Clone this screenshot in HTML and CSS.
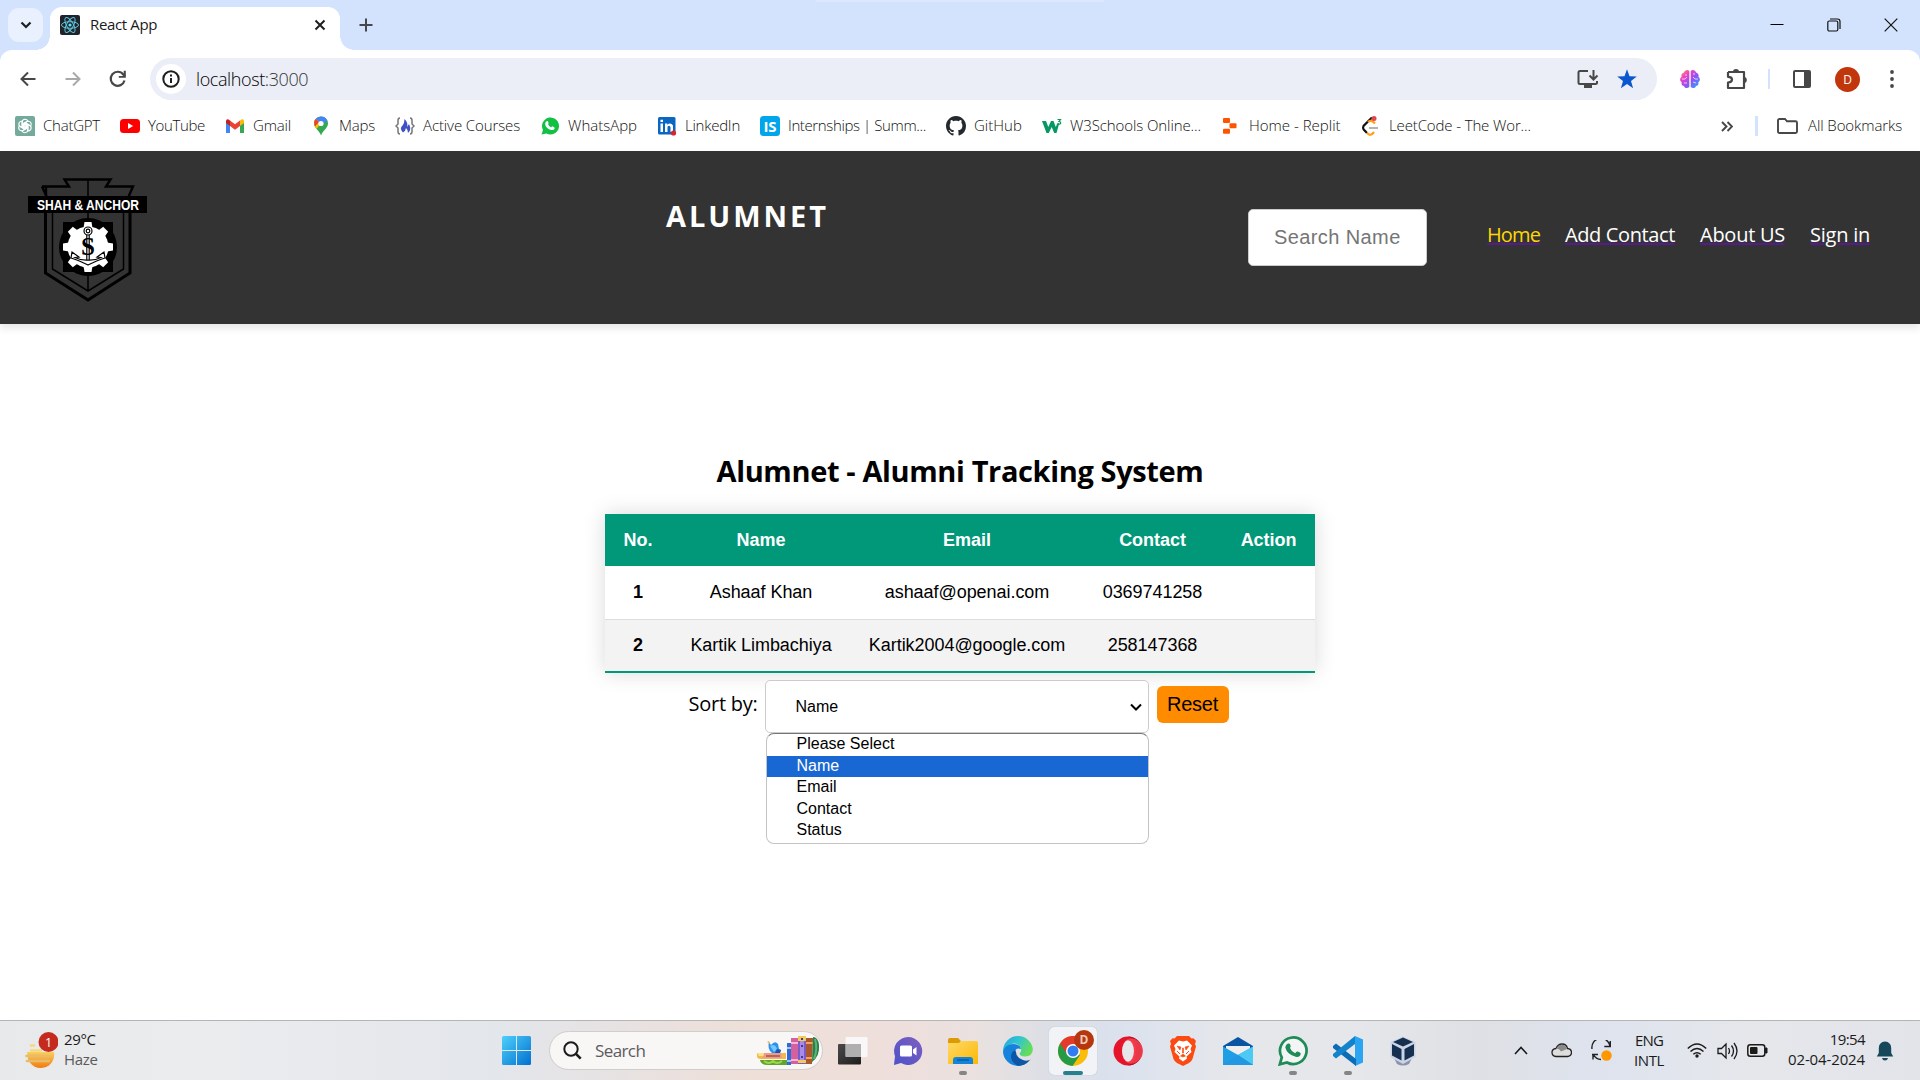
FILE: index.html
```html
<!DOCTYPE html>
<html lang="en">
<head>
<meta charset="utf-8">
<title>React App</title>
<link rel="stylesheet" href="styles.css">
</head>
<body>
<div class="screen">
  <div class="tabstrip">
    <div class="tab-search"><svg width="12" height="8" viewBox="0 0 12 8"><path d="M1.5 1.5 6 6l4.500-4.500" fill="none" stroke="#1f1f1f" stroke-width="2.200"/></svg></div>
    <div class="tab">
      <svg class="fav" width="20" height="20" viewBox="0 0 20 20"><rect width="20" height="20" rx="2" fill="#20232a"/><g fill="none" stroke="#5cc5dd" stroke-width="1"><ellipse cx="10" cy="10" rx="8.500" ry="3.300"/><ellipse cx="10" cy="10" rx="8.500" ry="3.300" transform="rotate(60 10 10)"/><ellipse cx="10" cy="10" rx="8.500" ry="3.300" transform="rotate(120 10 10)"/></g><circle cx="10" cy="10" r="1.600" fill="#61dafb"/></svg>
      <span class="tab-title">React App</span>
      <svg width="12" height="12" viewBox="0 0 12 12"><path d="M1.500 1.500l9 9M10.500 1.500l-9 9" stroke="#1f1f1f" stroke-width="2"/></svg>
    </div>
    <svg class="new-tab" width="14" height="14" viewBox="0 0 14 14"><path d="M7 .5v13M.5 7h13" stroke="#474747" stroke-width="2"/></svg>
    <div class="win-controls">
      <svg width="14" height="14" viewBox="0 0 14 14"><path d="M.5 6.500h13" stroke="#000" stroke-width="1"/></svg>
      <svg width="14" height="14" viewBox="0 0 14 14"><g fill="none" stroke="#111" stroke-width="1.200"><rect x=".8" y="3" width="10" height="10" rx="1.500"/><path d="M3 1h7.500q2.500 0 2.500 2.500V11"/></g></svg>
      <svg width="14" height="14" viewBox="0 0 14 14"><path d="M.7.7l12.600 12.600M13.300.7.7 13.300" stroke="#111" stroke-width="1.200"/></svg>
    </div>
  </div>
  <div class="chrome">
    <div class="toolbar">
      <svg class="t-back" width="16" height="16" viewBox="0 0 16 16"><path d="M15.500 8H2M8 1.500 1.500 8 8 14.500" fill="none" stroke="#474747" stroke-width="2"/></svg>
      <svg class="t-fwd" width="16" height="16" viewBox="0 0 16 16"><path d="M.5 8H14M8 1.500 14.500 8 8 14.500" fill="none" stroke="#a9a9a9" stroke-width="2"/></svg>
      <svg class="t-reload" width="18" height="18" viewBox="0 0 18 18"><path d="M15.500 10.500A7 7 0 1 1 14.300 4.500L16 6.500" fill="none" stroke="#474747" stroke-width="2.200"/><path d="M16.800.8v7h-7V6h4.900V.8z" fill="#474747"/></svg>
      <div class="omnibox">
        <div class="info"><svg width="18" height="18" viewBox="0 0 18 18"><circle cx="9" cy="9" r="7.700" fill="none" stroke="#1f1f1f" stroke-width="2"/><path d="M9 8v5M9 4.600v2" stroke="#1f1f1f" stroke-width="2"/></svg></div>
        <span class="url">localhost<i>:3000</i></span>
        <svg class="install" width="22" height="20" viewBox="0 0 22 20"><path d="M11 2H3Q1.500 2 1.500 3.500v10Q1.500 15 3 15h15.500Q20 15 20 13.500V12" fill="none" stroke="#474747" stroke-width="2"/><path d="M7 15h8v4H7z" fill="#474747"/><path d="M16.500 1v9M12.500 6.500l4 4 4-4" fill="none" stroke="#474747" stroke-width="2"/></svg>
        <svg width="20" height="20" viewBox="0 0 20 20"><path d="M10 .3l2.500 6.900 7.300.2-5.800 4.500 2.100 7.300L10 15l-6.100 4.200L6 11.900.2 7.400l7.300-.2z" fill="#0b57d0"/></svg>
      </div>
      <svg class="brain" width="20" height="20" viewBox="0 0 20 20"><defs><linearGradient id="br" x1="0" y1="0" x2="1" y2="1"><stop offset="0" stop-color="#ffb02e"/><stop offset=".3" stop-color="#ee3fc8"/><stop offset=".6" stop-color="#8b55f6"/><stop offset="1" stop-color="#25b0ff"/></linearGradient></defs><path d="M9.300 2v16c-2 2-5 1-5.300-1-2 0-3-2-2.200-3.500C-.5 12-.3 9 1.500 8 1 5.500 2 4 4 3.500 4.500.8 8 0 9.300 2zM10.700 2v16c2 2 5 1 5.300-1 2 0 3-2 2.200-3.500 2.300-1.500 2.100-4.500.3-5.500.5-2.500-.5-4-2.500-4.500C15.500.8 12 0 10.700 2z" fill="url(#br)"/><path d="M2 10h3l2-2M4 14h3M6 5v2M18 10h-3l-2-2M16 14l-3-1M14 4v2" fill="none" stroke="#fff" stroke-opacity=".7" stroke-width="1"/></svg>
      <svg class="puzzle" width="22" height="21" viewBox="0 0 22 21"><path d="M2 3h16v5.500M18 13v6H2v-5.500q4-.3 4-3T2 7.800V3M18 8v6" fill="none" stroke="#474747" stroke-width="2.200" stroke-linejoin="round"/><path d="M7 2.500a3 2.500 0 0 1 6 0zM18 8a2.800 3 0 0 1 0 6z" fill="#474747"/></svg>
      <div class="sep"></div>
      <svg class="panel" width="18" height="18" viewBox="0 0 18 18"><rect x="1" y="1" width="16" height="16" rx="1" fill="none" stroke="#474747" stroke-width="2"/><path d="M11 1h6v16h-6z" fill="#474747"/></svg>
      <div class="avatar">D</div>
      <svg class="kebab" width="4" height="18" viewBox="0 0 4 18"><g fill="#474747"><circle cx="2" cy="2" r="1.900"/><circle cx="2" cy="9" r="1.900"/><circle cx="2" cy="16" r="1.900"/></g></svg>
    </div>
    <div class="bookmarks">
      <div class="bm chatgpt"><svg viewBox="0 0 20 20"><path d="M2 0h16q2 0 2 2v18H2q-2 0-2-2V2q0-2 2-2z" fill="#74aa9c"/><g fill="none" stroke="#fff" stroke-width="1.100"><path id="petal" d="M10 7.500 13 9.200v4.300q-.3 3-3 3.200-2 0-3-1.800l4-2.200V8.500"/><use href="#petal" transform="rotate(60 10 10)"/><use href="#petal" transform="rotate(120 10 10)"/><use href="#petal" transform="rotate(180 10 10)"/><use href="#petal" transform="rotate(240 10 10)"/><use href="#petal" transform="rotate(300 10 10)"/></g></svg><span>ChatGPT</span></div>
      <div class="bm youtube"><svg viewBox="0 0 20 20"><rect y="3" width="20" height="14" rx="3.500" fill="#f00"/><path d="M8 7v6l5.200-3z" fill="#fff"/></svg><span>YouTube</span></div>
      <div class="bm gmail"><svg viewBox="0 0 20 20"><path d="M1 5v12h4V9z" fill="#4285f4"/><path d="M15 9v8h4V5z" fill="#34a853"/><path d="M15 4.500V10l4-3V5q-.5-3-4-.5z" fill="#fbbc04"/><path d="M5 4.500 10 8.300l5-3.800V10l-5 3.800L5 10z" fill="#ea4335"/><path d="M1 5v2l4 3V4.500Q1.500 2 1 5z" fill="#c5221f"/></svg><span>Gmail</span></div>
      <div class="bm maps"><svg viewBox="0 0 20 20"><path d="M10 .5A7 7 0 0 1 17 7.500C17 12 12 14 10 19.500 8 14 3 12 3 7.500A7 7 0 0 1 10 .5z" fill="#34a853"/><path d="M10 .5A7 7 0 0 1 16.400 4.800L10 9 4.600 3A7 7 0 0 1 10 .5z" fill="#4285f4"/><path d="M4.600 3 10 7.500 5.500 13Q3 10.500 3 7.500 3 5 4.600 3z" fill="#fbbc04"/><path d="M4.600 3 8 6 4 10.500Q2 6 4.600 3z" fill="#ea4335"/><circle cx="10" cy="7.500" r="2.600" fill="#fff"/></svg><span>Maps</span></div>
      <div class="bm courses"><svg viewBox="0 0 20 20"><path d="M5 2Q3 2 3 4.500V8L1 10l2 2v3.500Q3 18 5 18M15 2q2 0 2 2.500V8l2 2-2 2v3.500q0 2.500-2 2.500" fill="none" stroke="#777" stroke-width="1.500"/><path d="M9.500 3q4 4 2.500 8l2-3q3 6-1 9 .3-3-2-5-.5 3-3 4.500-4-4-.5-7 2-2 2-6.500z" fill="#3f51c5"/></svg><span>Active Courses</span></div>
      <div class="bm whatsapp"><svg viewBox="0 0 20 20"><path d="M1.500 18.500 3 14A8.500 8.500 0 1 1 6.500 17.500z" fill="#12c143"/><path d="M6.500 5.200q1.300-.5 1.800.8.6 1.500-.2 2.200.8 2 3 3.200 1-1.300 1.700-1 2.400.9 1.900 2-.7 2-3.500 1.600-5-1.200-6-5.500-.2-2.400 1.300-3.300z" fill="#fff"/></svg><span>WhatsApp</span></div>
      <div class="bm linkedin"><svg viewBox="0 0 20 20"><rect x="1" y="1" width="17.500" height="17.500" rx="1.500" fill="#0a66c2"/><path d="M3.500 7.500H6V16H3.500zM3.500 3.700H6V6H3.500zM8 7.500h2.300v1.200q3.500-2.800 5.700.8V16h-2.500v-5q-1.500-2.500-3-.2V16H8z" fill="#fff"/><circle cx="16.500" cy="17" r="2.600" fill="#e0202b"/></svg><span>LinkedIn</span></div>
      <div class="bm interns"><svg viewBox="0 0 20 20"><rect width="20" height="20" rx="3.500" fill="#00a5ec"/><text x="3.500" y="15.500" font-family="Open Sans" font-size="15" font-weight="700" fill="#fff" textLength="13">IS</text></svg><span>Internships | Summ...</span></div>
      <div class="bm github"><svg viewBox="0 0 16 16"><path fill="#24292f" d="M8 0C3.580 0 0 3.580 0 8c0 3.540 2.290 6.530 5.470 7.590.4.070.55-.17.55-.38 0-.19-.01-.82-.01-1.490-2.010.37-2.530-.49-2.690-.94-.09-.23-.48-.94-.82-1.130-.28-.15-.68-.52-.01-.53.63-.01 1.080.58 1.230.82.72 1.210 1.870.87 2.330.66.070-.52.280-.87.510-1.070-1.780-.2-3.640-.89-3.640-3.950 0-.87.310-1.590.820-2.150-.080-.2-.36-1.020.080-2.120 0 0 .67-.21 2.200.82.640-.18 1.320-.27 2-.27s1.360.09 2 .27c1.530-1.040 2.200-.82 2.200-.82.440 1.100.160 1.920.080 2.120.510.560.820 1.270.820 2.150 0 3.070-1.870 3.750-3.650 3.950.290.250.540.730.540 1.480 0 1.070-.01 1.930-.01 2.200 0 .21.150.46.550.38A8.010 8.010 0 0 0 16 8c0-4.420-3.580-8-8-8z"/></svg><span>GitHub</span></div>
      <div class="bm w3"><svg viewBox="0 0 20 20"><path d="M0 5h4l2.300 6L9 5h2.500l2.300 6 1.400-3.500h2L14.500 17h-2.300L9.700 11 6.800 17H4.500z" fill="#059862"/><path d="M15.500 3.500h3L17 5.500q2 .2 1.600 1.800-1 1.500-3 .2" fill="none" stroke="#059862" stroke-width="1.200"/></svg><span>W3Schools Online...</span></div>
      <div class="bm replit"><svg viewBox="0 0 20 20"><g fill="#fd5402"><rect x="2" y="2" width="7" height="5" rx="1"/><rect x="8.500" y="7.300" width="7" height="5" rx="1"/><rect x="2" y="12.700" width="7" height="5" rx="1"/></g></svg><span>Home - Replit</span></div>
      <div class="bm leet"><svg viewBox="0 0 20 20"><path d="M11 1.500 2.500 10q-1 2 .2 3.500L6 17" fill="none" stroke="#111" stroke-width="2.200"/><path d="M6 17q3.500 4 7-1M7 6q3-3 7 1.500" fill="none" stroke="#ffa116" stroke-width="2.200"/><path d="M8 12h9" stroke="#b3b3b3" stroke-width="2"/><circle cx="13" cy="2.500" r="2.500" fill="#e0464f"/></svg><span>LeetCode - The Wor...</span></div>
      <svg class="more" width="12" height="11" viewBox="0 0 12 11"><path d="M1 1l4.500 4.500L1 10M6.500 1 11 5.500 6.500 10" fill="none" stroke="#474747" stroke-width="1.900"/></svg>
      <div class="sep2"></div>
      <svg class="folder" width="21" height="16" viewBox="0 0 21 16"><path d="M1 13.500v-11Q1 1 2.500 1H8l2 2.300h8.500Q20 3.300 20 4.800v8.700q0 1.500-1.500 1.500h-16Q1 15 1 13.500z" fill="none" stroke="#474747" stroke-width="1.900"/></svg>
      <span class="all">All Bookmarks</span>
    </div>
  </div>

  <div class="page">
    <header class="site-head">
      <svg class="logo" width="120" height="126" viewBox="0 0 120 126">
        <g fill="none" stroke="#000"><path d="M18 20V8.500h23L36.500 1.500h46L78 8.500h27L100 20M14 8.500h25M14 8.500l5 11" stroke-width="2.400"/><path d="M17.500 35v60L60 122l42-27V35" stroke-width="3"/><path d="M24.500 35v56L60 113l35.500-22V35M60 2v111" stroke-width="1.500"/></g>
        <path d="M0 18h119v17H0z"/>
        <text x="9" y="31.500" font-family="Liberation Sans" font-size="14" font-weight="700" fill="#fff" textLength="102" lengthAdjust="spacingAndGlyphs">SHAH &amp; ANCHOR</text>
        <path d="M35 44h50v50H35z"/><circle cx="60" cy="69" r="29"/>
        <circle cx="60" cy="69" r="20.500" fill="#fff"/>
        <g fill="#fff"><path id="tooth" d="M55.500 50l1-6h7l1 6z"/><use href="#tooth" transform="rotate(45 60 69)"/><use href="#tooth" transform="rotate(90 60 69)"/><use href="#tooth" transform="rotate(135 60 69)"/><use href="#tooth" transform="rotate(180 60 69)"/><use href="#tooth" transform="rotate(225 60 69)"/><use href="#tooth" transform="rotate(270 60 69)"/><use href="#tooth" transform="rotate(315 60 69)"/></g>
        <g fill="none" stroke="#000" stroke-width="1.200"><circle cx="60" cy="53" r="4"/><circle cx="60" cy="53" r="1.800"/><path d="M58.800 57v25M61.200 57v25M44 74l-1 6q7 2 17 7 10-5 17-7l-1-6-7 5 4 .5q-6 3-13 2.500-7 .5-13-2.500l4-.5z"/></g>
        <text x="60" y="77" text-anchor="middle" font-family="Liberation Serif" font-size="25" font-weight="700">S</text>
      </svg>
      <h1 class="brand">ALUMNET</h1>
      <input class="search" placeholder="Search Name">
      <nav class="nav"><a class="home"><span>Home</span></a><a class="add"><span>Add Contact</span></a><a class="about"><span>About US</span></a><a class="signin"><span>Sign in</span></a></nav>
    </header>
    <main class="content">
      <h2>Alumnet - Alumni Tracking System</h2>
      <table>
        <colgroup><col class="c1"><col class="c2"><col class="c3"><col class="c4"><col class="c5"></colgroup>
        <thead><tr><th>No.</th><th>Name</th><th>Email</th><th>Contact</th><th>Action</th></tr></thead>
        <tbody>
          <tr><th>1</th><td>Ashaaf Khan</td><td>ashaaf@openai.com</td><td>0369741258</td><td></td></tr>
          <tr><th>2</th><td>Kartik Limbachiya</td><td>Kartik2004@google.com</td><td>258147368</td><td></td></tr>
        </tbody>
      </table>
      <div class="sort">
        <label>Sort by:</label>
        <div class="select">
          <span>Name</span>
          <svg width="12" height="8" viewBox="0 0 12 8"><path d="M1 1.500l5 5 5-5" fill="none" stroke="#000" stroke-width="2"/></svg>
          <ul class="options"><li>Please Select</li><li class="sel">Name</li><li>Email</li><li>Contact</li><li>Status</li></ul>
        </div>
        <button>Reset</button>
      </div>
    </main>
  </div>

  <footer class="taskbar">
    <div class="weather">
      <svg width="38" height="38" viewBox="0 0 38 38"><defs><linearGradient id="sun" x1="0" y1="0" x2="0" y2="1"><stop offset="0" stop-color="#fbd05c"/><stop offset="1" stop-color="#f27a10"/></linearGradient></defs><path d="M7 20h27a13.500 13.500 0 0 1-26 7z" fill="url(#sun)"/><g stroke-linecap="round" stroke-width="2.600"><path d="M11 13.500h3M11 18.500h10" stroke="#f9d778"/><path d="M6.500 24h17M7 29h22M23 24h6" stroke="#e6bd6c"/></g><circle cx="28.500" cy="10" r="10" fill="#c42b1c"/><text x="28.500" y="14.500" text-anchor="middle" font-family="Open Sans" font-size="12.500" fill="#fff">1</text></svg>
      <div class="wt"><span>29°C</span><span class="dim">Haze</span></div>
    </div>
    <svg class="start" width="29" height="29" viewBox="0 0 29 29"><defs><linearGradient id="wn" x1="0" y1="0" x2="1" y2="1"><stop offset="0" stop-color="#4fd0fb"/><stop offset="1" stop-color="#0070cf"/></linearGradient></defs><path d="M1.500 0H14v14H0V1.500Q0 0 1.500 0zM15 0h12.500Q29 0 29 1.500V14H15zM0 15h14v14H1.500Q0 29 0 27.500zM15 15h14v12.500q0 1.500-1.500 1.500H15z" fill="url(#wn)"/></svg>
    <div class="tsearch">
      <svg width="19" height="19" viewBox="0 0 19 19"><circle cx="8" cy="8" r="6.700" fill="none" stroke="#1b1b1b" stroke-width="2"/><path d="M12.700 12.700l5 5" stroke="#1b1b1b" stroke-width="2.600"/></svg>
      <span>Search</span>
      <svg class="art" width="64" height="30" viewBox="0 0 64 30"><path d="M4 24h27v5H12q-7 0-8-5z" fill="#5da52c"/><path d="M8 25q5 4 9 0 4 4 9 0" fill="none" stroke="#9fd44c" stroke-width="2"/><path d="M1 17h29v6H5q-4 0-4-3z" fill="#f0b94a"/><path d="M1 17h10v3H3z" fill="#ffe18a"/><path d="M8 17h17l1 5H7z" fill="#ee9a86"/><path d="M10 19h14v2H10z" fill="#b5655a"/><path d="M13 6l2 3q4-5 7-1l1 5 2 1-1 3h-8q-5-4-3-11z" fill="#2a93ec"/><path d="M14 10q5-3 7 3l-3 3z" fill="#76c5ff"/><path d="M21 13l4 1-1 3h-5z" fill="#1559b5"/><path d="M11 6l2-1 1 3z" fill="#f7b030"/><path d="M31 7h4v22h-4z" fill="#2f6bd3"/><path d="M31 11h4v2h-4zM31 24h4v2h-4z" fill="#9ec4ff"/><path d="M35 2h7v26h-7z" fill="#d2619d"/><path d="M35 6h7v2h-7zM35 23h7v2h-7z" fill="#f7b6d4"/><path d="M42 0h8v28h-8z" fill="#7c5cc9"/><path d="M42 0h8v5h-8zM42 24h8v3h-8z" fill="#f2cb5d"/><path d="M44 5h4v19h-4z" fill="#a78be6"/><path d="M45 2h2v2h-2zM45 9h2v2h-2zM45 20h2v2h-2z" fill="#4d3590"/><path d="M50 2h7l-1 26h-6z" fill="#a9592b"/><path d="M50 6h7v2h-7zM50 21h6v2h-6z" fill="#f3a264"/><path d="M57 1q5 0 6 8 1 11-7 17z" fill="#2b8049"/><path d="M59 3q3 10-1 20" fill="none" stroke="#5bb476" stroke-width="2"/></svg>
    </div>
    <div class="apps">
      <div class="app"><svg width="30" height="30" viewBox="0 0 30 30"><defs><linearGradient id="tv" x1="0" y1="0" x2="1" y2="1"><stop offset="0" stop-color="#4a4a4a"/><stop offset="1" stop-color="#1d1d1d"/></linearGradient></defs><rect y="8" width="23" height="20.500" rx="1" fill="url(#tv)"/><rect x="7.500" y="1" width="22" height="20" rx="1" fill="#fafafa" fill-opacity=".87"/><path d="M7.500 8H23v13H7.500z" fill="#9a9a9a" fill-opacity=".7"/></svg></div>
      <div class="app"><svg width="30" height="30" viewBox="0 0 30 30"><defs><linearGradient id="ch" x1="1" y1="0" x2="0" y2="1"><stop offset="0" stop-color="#7f5fc0"/><stop offset="1" stop-color="#4b52c9"/></linearGradient></defs><path d="M15 1a14 14 0 1 1-7 26L1 29l1-9A14 14 0 0 1 15 1z" fill="url(#ch)"/><rect x="7" y="9.500" width="12" height="11" rx="1.500" fill="#fff"/><path d="M20 13.500 23.500 11v8.500L20 17z" fill="#fff"/></svg></div>
      <div class="app run"><svg width="30" height="30" viewBox="0 0 30 30"><defs><linearGradient id="fo" x1="0" y1="0" x2="1" y2="1"><stop offset="0" stop-color="#ffd966"/><stop offset="1" stop-color="#fbb806"/></linearGradient></defs><path d="M0 4q0-2 2-2h8l3 3-2 3H0z" fill="#dc9a08"/><path d="M0 7h11l2-2h15q2 0 2 2v21H0z" fill="url(#fo)"/><path d="M5 28v-4q0-3 3-3h14q3 0 3 3v4z" fill="#1384d7"/><path d="M9 24h12" stroke="#0a5ca4" stroke-width="1.500"/></svg></div>
      <div class="app"><svg width="30" height="30" viewBox="0 0 30 30"><defs><linearGradient id="e1" x1="0" y1="0" x2="1" y2=".5"><stop offset="0" stop-color="#269fe5"/><stop offset=".5" stop-color="#31c6cf"/><stop offset="1" stop-color="#66dd58"/></linearGradient><clipPath id="ec"><circle cx="15" cy="15" r="15"/></clipPath></defs><g clip-path="url(#ec)"><path d="M0 0h30v13q-.5 7.500-8 7.500-5 0-5.500-3 3.500-4 0-7.500-7-7-16.500 5z" fill="url(#e1)"/><path d="M0 15Q3 8 10 8q7 0 8 5-5-2-6 3-1 5 3 9 4 4 9 3L20 30H0z" fill="#1583dc"/><path d="M12 14q-4 2-4 7 1 7 8 9h6q6-2 8-8-5 4-10 2-7-3-7-8z" fill="#0d56a5"/></g></svg></div>
      <div class="app active"><svg width="30" height="30" viewBox="0 0 30 30"><circle cx="15" cy="15" r="15" fill="#fbbc0a"/><path d="M15 15 2 7.500A15 15 0 0 0 14.500 30L22 19z" fill="#269b45"/><path d="M15 8h13.300A15 15 0 0 0 2 7.500L9 18z" fill="#e23b2e"/><circle cx="15" cy="15" r="7" fill="#fff"/><circle cx="15" cy="15" r="5.500" fill="#2f7df0"/></svg><b class="pbadge">D</b></div>
      <div class="app"><svg width="30" height="30" viewBox="0 0 30 30"><ellipse cx="15" cy="15" rx="14.500" ry="14.500" fill="#e5142a"/><path d="M15 .5q5 0 9.500 3.500a15 15 0 0 1 0 22Q20 29.500 15 29.500q8-3 8-14.500T15 .5z" fill="#b60f22"/><path d="M12 5q4-4 10-2 8 4 8 12t-8 12q-6 2-10-2 9 1 9-10T12 5z" fill="#ff4c58" fill-opacity=".7"/><ellipse cx="15" cy="15" rx="6" ry="10.700" fill="#e5e7eb"/></svg></div>
      <div class="app"><svg width="30" height="30" viewBox="0 0 30 30"><path d="M9 0h12l2.500 2.500 2-.3L28 5l-1 3 1 2.500L24.500 23q-1 2.500-3.500 4l-6 3-6-3q-2.500-1.500-3.500-4L2 10.500 3 8 2 5l2.500-2.800 2 .3z" fill="#fb4b12"/><path d="M15 5.500l4-1 5 5-1.500 3.500 1 3-5 4.500.5 2-4 3-4-3 .5-2-5-4.500 1-3L6 9.500l5-5z" fill="#fff"/><path d="M9 10l4 1-1 3zM21 10l-4 1 1 3zM12.500 20l2.500-2 2.500 2-2.500 1zM14.500 12h1v5h-1z" fill="#fb4b12" stroke="#fb4b12" stroke-width=".6"/><path d="M9 15l3 3M21 15l-3 3" stroke="#fb4b12"/></svg></div>
      <div class="app"><svg width="30" height="30" viewBox="0 0 30 30"><path d="M0 10 15 1l15 9v4H0z" fill="#0a55a3"/><path d="M3 10h24v8H3z" fill="#eee"/><path d="M0 10.500 15 19l15-8.500V29H0z" fill="#1e9fe4"/><path d="M30 10.500V29L15 19z" fill="#4cc9f5"/><path d="M0 29l15-10 15 10z" fill="#2497e3"/></svg></div>
      <div class="app run"><svg width="30" height="30" viewBox="0 0 30 30"><path d="M1.800 28.300 3.800 21.500A13.300 13.300 0 1 1 9 26.500z" fill="#f3f5f5" stroke="#1e8b58" stroke-width="2.700"/><path d="M10 7.500q1.700-.5 2.300 1.300.9 2-.3 3.200 1.200 3.500 5.200 5.200 1.300-2 2.300-1.700 3.500 1.200 3.200 2.500-.7 3.500-5 2.800Q9 18.500 7.300 11.500 7.500 8.500 10 7.500z" fill="#1e8b58"/></svg></div>
      <div class="app run"><svg width="30" height="30" viewBox="0 0 30 30"><path d="M22 0l8 3.500v23L22 30z" fill="#2ba4f2"/><path d="M0 10l3-2.500L23 23v7L0 12z" fill="#0a6db5"/><path d="M0 20l3 2.500L22 8V0L0 18z" fill="#1383cc"/></svg></div>
      <div class="app vb"><svg width="28" height="30" viewBox="0 0 28 30"><path d="M5 22l9 4 9-4-3 6q-6 3-12 0z" fill="#8c93a8"/><path d="M14 .5 26.500 6v15L14 28 1.500 21V6z" fill="#cbd3e6"/><path d="M14 1.500 24 6l-10 4.500L4 6zM3 8l9.500 5v11.500L3 19.500zM25 8l-9.500 5v11.500l9.500-5z" fill="#16304f"/></svg></div>
    </div>
    <div class="tray">
      <svg class="y1" width="14" height="9" viewBox="0 0 14 9"><path d="M1 8l6-6.500L13 8" fill="none" stroke="#1b1b1b" stroke-width="1.600"/></svg>
      <svg class="y2" width="21" height="15" viewBox="0 0 21 15"><path d="M5 13.500q-4-.5-4-4t4-4q2-4.500 6-4.500 4.500 0 5.500 4.500 4 .5 4 4t-4 4z" fill="#dedede" stroke="#222" stroke-width="1.300"/><path d="M5 6q2-4.500 6-4.300 4 0 5 4.300l-6 2.500Q8 5 5 6z" fill="#8a8a8a"/></svg>
      <svg class="y3" width="21" height="21" viewBox="0 0 21 21"><path d="M1 9A9 9 0 0 1 19 6M19.300 1v5.500h-6M2 14v5.500M1 14.500h6M2 14q3 5.500 8 5.500" fill="none" stroke="#222" stroke-width="1.400"/><circle cx="15.500" cy="15.500" r="5.200" fill="#ff9800"/></svg>
      <div class="lang"><span>ENG</span><span class="intl">INTL</span></div>
      <svg class="y4" width="20" height="15" viewBox="0 0 20 15"><g fill="none" stroke="#1b1b1b" stroke-width="1.500"><path d="M.8 5.500Q10-3.500 19.200 5.500M3.500 8.500q6.500-6 13 0M6.300 11.300q3.700-3.200 7.400 0"/></g><circle cx="10" cy="13" r="1.700" fill="#1b1b1b"/></svg>
      <svg class="y5" width="21" height="18" viewBox="0 0 21 18"><g fill="none" stroke="#1b1b1b" stroke-width="1.300"><path d="M1 6.500h3.500L9 2v14l-4.500-4.500H1zM11.500 6q2 3 0 6M14.500 3.500q4 5.500 0 11M17 1q6 8 0 16"/></g></svg>
      <svg class="y6" width="21" height="13" viewBox="0 0 21 13"><rect x=".8" y=".8" width="17" height="11.400" rx="2.500" fill="none" stroke="#1b1b1b" stroke-width="1.500"/><rect x="3" y="3" width="7.500" height="7" rx="1" fill="#1b1b1b"/><path d="M18.500 4h1.500v5h-1.500z" fill="#1b1b1b" stroke="#1b1b1b"/></svg>
      <div class="clock"><span class="time">19:54</span><span class="date">02-04-2024</span></div>
      <svg class="bell" width="18" height="20" viewBox="0 0 18 20"><path d="M9 .5q6 .5 6.200 6.500v5l2 3.500H.8l2-3.500V7Q3 1 9 .5zM6 17h6q-.5 2.500-3 2.500T6 17z" fill="#17485a"/></svg>
    </div>
  </footer>
</div>
</body>
</html>
```
FILE: styles.css
```css
* { box-sizing: border-box; }
body { margin: 0; font-family: "Open Sans", "Noto Sans", sans-serif; background: #fff; }
svg { display: block; flex: none; }
.screen { width: 1920px; height: 1080px; display: flex; flex-direction: column; overflow: hidden; }

/* Browser tab strip */
.tabstrip { height: 50px; background: linear-gradient(90deg, transparent 815px, #dce8fd 816px, #dce8fd 1104px, transparent 1105px) 0 0 / 100% 2px no-repeat #d3e2fd; display: flex; align-items: center; flex: none; padding-left: 8px; }
.tab-search { width: 35px; height: 34px; border-radius: 11px; background: #e9f0fe; display: flex; align-items: center; justify-content: center; margin-right: 7px; }
.tab { position: relative; width: 290px; height: 43px; align-self: flex-end; background: #fff; border-radius: 12px 12px 0 0; display: flex; align-items: center; padding: 0 14px 7px 10px; }
.tab::before, .tab::after { content: ""; position: absolute; bottom: 0; width: 14px; height: 14px; }
.tab::before { left: -14px; background: radial-gradient(circle at 0 0, transparent 13.500px, #fff 14px); }
.tab::after { right: -14px; background: radial-gradient(circle at 100% 0, transparent 13.500px, #fff 14px); }
.tab svg { margin-top: 0; }
.tab-title { font-size: 15px; color: #1a1a1a; margin: -2px auto 0 10px; white-space: nowrap; letter-spacing: -.35px; }
.new-tab { margin-left: 19px; }
.win-controls { margin-left: auto; display: flex; gap: 43px; padding-right: 22px; }

/* Toolbar */
.chrome { background: linear-gradient(#d3e2fd 20px, #fff 20px); height: 101px; flex: none; }
.toolbar { height: 58px; background: #fff; border-radius: 12px 12px 0 0; display: flex; align-items: center; padding-left: 20px; }
.t-fwd { margin-left: 29px; }
.t-reload { margin-left: 28px; }
.omnibox { width: 1507px; height: 42px; border-radius: 21px; background: #ebeef7; display: flex; align-items: center; margin-left: 23px; padding: 0 20px 0 6px; }
.info { width: 30px; height: 30px; border-radius: 50%; background: #fff; display: flex; align-items: center; justify-content: center; }
.url { font-size: 18px; color: #000; margin: 0 auto 0 10px; white-space: nowrap; font-weight: 300; letter-spacing: -.4px; }
.url i { font-style: normal; color: #333; }
.install { margin-right: 18px; }
.brain { margin-left: 23px; }
.puzzle { margin-left: 26px; }
.sep { width: 2px; height: 20px; background: #d3e2fd; margin-left: 20px; }
.panel { margin-left: 23px; }
.avatar { width: 25px; height: 25px; border-radius: 50%; background: #c2360c; color: #fff; font-size: 12px; line-height: 25px; text-align: center; margin-left: 24px; }
.kebab { margin-left: 30px; }

/* Bookmarks bar */
.bookmarks { display: flex; height: 36px; align-items: center; padding-left: 15px; white-space: nowrap; font-size: 15px; font-weight: 300; color: #111; }
.bm { display: flex; align-items: center; gap: 8px; margin-right: 20px; }
.bm svg { width: 20px; height: 20px; }
.bm span, .all { position: relative; top: -1px; }
.bm span { flex: none; }
.chatgpt span { width: 57px; letter-spacing: -.23px; }
.youtube span { width: 57px; letter-spacing: -.35px; }
.gmail span { width: 38px; letter-spacing: -.17px; }
.maps span { width: 36px; letter-spacing: -.2px; }
.courses span { width: 97px; letter-spacing: -.11px; }
.whatsapp span { width: 69px; }
.linkedin span { width: 55px; letter-spacing: -.25px; }
.interns span { width: 138px; letter-spacing: -.38px; }
.github span { width: 48px; }
.w3 span { width: 131px; letter-spacing: -.1px; }
.replit span { width: 92px; }
.leet span { width: 142px; letter-spacing: -.13px; }
.more { margin-left: auto; }
.sep2 { width: 3px; height: 20px; background: #d3e2fd; margin: 0 19px 0 22px; }
.folder { margin-right: 10px; }
.all { width: 94px; letter-spacing: -.09px; margin-right: 18px; }

/* Site header */
.page { flex: 1; background: #fff; }
.site-head { height: 173px; background: #333; display: flex; align-items: flex-start; padding-left: 28px; box-shadow: 0 4px 8px rgba(0,0,0,.1); }
.logo { margin-top: 27px; }
.brand { margin: 45px 0 0 518px; font-size: 29px; line-height: 40px; color: #fff; width: 582px; letter-spacing: 2.950px; }
.search { width: 179px; height: 57px; margin: 58px 0 0; border: 1px solid #ccc; border-radius: 5px; background: #fff; padding: 0 25px; font: 20px "Liberation Sans", sans-serif; letter-spacing: .4px; }
.search::placeholder { color: #757575; }
.nav { display: flex; gap: 25px; margin: 70px 0 0 60px; font-size: 20px; line-height: 27px; white-space: nowrap; }
.nav a { text-decoration: underline 2px #551a8b; text-underline-offset: 1px; }
.nav span { color: #fff; }
.nav .home span { color: #ffd700; }
.home { width: 53px; letter-spacing: -.88px; }
.add { width: 110px; letter-spacing: -.38px; }
.about { width: 85px; letter-spacing: -.26px; }
.signin { width: 60px; letter-spacing: -.24px; }

/* Contact list */
.content { display: flex; flex-direction: column; align-items: center; }
h2 { margin: 127px 0 0; font-size: 29px; line-height: 40px; letter-spacing: -.37px; }
table { width: 710px; table-layout: fixed; border-collapse: collapse; margin-top: 23px; font: 18px "Liberation Sans", sans-serif; letter-spacing: -.05px; box-shadow: 0 0 20px rgba(0,0,0,.15); text-align: center; }
.c1 { width: 66px; } .c2 { width: 180px; } .c3 { width: 232px; } .c4 { width: 139px; }
th, td { padding: 0; height: 52px; }
tbody th, tbody td { height: 53px; padding-top: 1px; }
thead tr { background: #009879; color: #fff; }
tbody tr { border-bottom: 1px solid #ddd; }
tbody tr:last-child { background: #f3f3f3; border-bottom: 2px solid #009879; }
.sort { display: flex; align-items: flex-start; margin: 7px 3px 0 0; }
.sort label { width: 69px; font-size: 20px; line-height: 27px; margin-top: 10px; white-space: nowrap; letter-spacing: -.25px; }
.select { position: relative; width: 384px; height: 53px; margin-left: 7px; background: #fff; border: 1px solid #ccc; border-radius: 5px; display: flex; align-items: center; justify-content: space-between; padding: 0 6px 0 30px; font: 16px "Liberation Sans", sans-serif; }
.options { position: absolute; left: 0; top: 52px; width: 383px; height: 111px; margin: 0; padding: 0; list-style: none; background: #fff; border: 1px solid #c4c4c4; border-top-color: #767676; border-radius: 8px; z-index: 2; }
.options li { height: 21.600px; line-height: 20px; padding-left: 30px; }
.options .sel { background: #1967d2; color: #fff; }
.sort button { width: 72px; height: 37px; margin: 6px 0 0 8px; padding: 0; border: 0; border-radius: 6px; background: #ff8c00; font: 20px "Liberation Sans", sans-serif; letter-spacing: -.25px; color: #000; }

/* Taskbar */
.taskbar { height: 60px; flex: none; border-top: 1px solid #b5b5b5; display: flex; align-items: center; background: linear-gradient(90deg, #e8e9eb 0, #ebecee 200px, #e3e6eb 500px, #e7e2e2 620px, #eedfd8 750px, #eedfdc 900px, #e9e1e0 980px, #dcdfe6 1050px, #dbe2ee 1120px, #e6e7ea 1240px, #e6e7ea 1350px, #dfe0e5 1480px, #dee3ee 1600px, #e5e7eb 1750px, #e2e4ea 1920px); font-size: 15px; color: #1b1b1b; }
.weather { display: flex; width: 502px; padding-left: 20px; }
.wt { display: flex; flex-direction: column; align-items: flex-start; margin: -3px 0 0 6px; line-height: 20px; letter-spacing: -.35px; }
.dim { color: #5a5a5a; }
.tsearch { width: 274px; height: 39px; border-radius: 20px; margin-left: 18px; background: #f9f6f6; border: 1px solid #d0cdcd; display: flex; align-items: center; padding: 0 2px 0 13px; font-size: 17px; color: #5c5c5c; }
.tsearch span { margin-left: 13px; letter-spacing: -.6px; }
.art { margin-left: auto; }
.apps { display: flex; gap: 7px; margin-left: 6px; }
.app { position: relative; width: 48px; height: 48px; display: flex; align-items: center; justify-content: center; border-radius: 5px; }
.run::after, .active::after { content: ""; position: absolute; bottom: 0; width: 8px; height: 4px; border-radius: 2px; background: #858585; }
.active { background: #f1f3f7; box-shadow: 0 0 1px #aaa; }
.active::after { width: 20px; background: #26818f; }
.pbadge { position: absolute; left: 25px; top: 3px; width: 20px; height: 20px; border-radius: 50%; background: #b5360f; color: #f3c8b8; font-size: 12px; line-height: 20px; text-align: center; }
.tray { display: flex; align-items: center; margin-left: auto; line-height: 20px; }
.y2 { margin-left: 23px; } .y3 { margin-left: 19px; }
.lang { display: flex; flex-direction: column; align-items: center; width: 32px; margin: -1px 0 0 21px; letter-spacing: -.8px; }
.intl { letter-spacing: -.4px; }
.y4 { margin-left: 22px; } .y5 { margin-left: 10px; } .y6 { margin-left: 9px; }
.clock { display: flex; flex-direction: column; align-items: flex-end; width: 97px; margin-top: -3px; }
.time { letter-spacing: -.6px; }
.date { letter-spacing: -.13px; }
.bell { margin: 0 26px 0 11px; }
```
